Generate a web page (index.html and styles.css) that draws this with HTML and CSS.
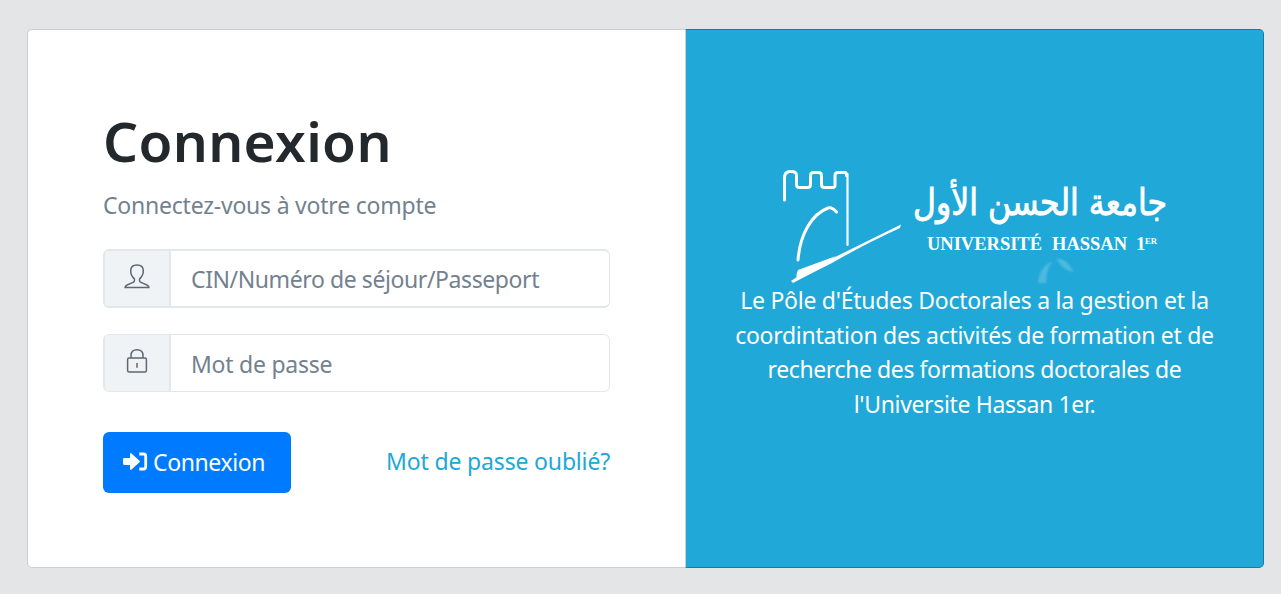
FILE: index.html
```
<!DOCTYPE html>
<html lang="fr">
<head>
<meta charset="utf-8">
<title>Connexion</title>
<link rel="stylesheet" href="styles.css">
</head>
<body>
<main class="card-group">
  <section class="login">
    <h1 class="title">Connexion</h1>
    <p class="subtitle">Connectez-vous à votre compte</p>
    <div class="field">
      <span class="addon">
        <svg width="26" height="26" viewBox="0 0 26 26"><path d="M10.400 17v-2.200C7.900 12.800 6.600 9.800 6.700 6.600 6.800 2.900 9.300 1 13 1s6.200 1.900 6.300 5.600c.1 3.200-1.200 6.200-3.700 8.200V17c0 1.300 1.300 1.700 4.400 2.700 4 1.300 4.900 1.900 4.900 3.700H1.100c0-1.800.9-2.400 4.900-3.700 3.100-1 4.400-1.400 4.400-2.700z"/></svg>
      </span>
      <span class="control user-hint">CIN/Numéro de séjour/Passeport</span>
    </div>
    <div class="field">
      <span class="addon">
        <svg width="26" height="26" viewBox="0 0 26 26"><rect x="3.600" y="10" width="18.800" height="14" rx="1.500"/><path d="M7 10V7.500C7 3.700 9.500 1.700 13 1.700s6 2 6 5.800V10M13 15v4.800"/></svg>
      </span>
      <span class="control pass-hint">Mot de passe</span>
    </div>
    <div class="actions">
      <button class="submit" type="button">
        <svg width="25" height="20" viewBox="0 0 25 20"><path d="M0 7.400Q0 6 1.400 6H7V2.200Q7 .4 8.500 1.400l8 7.300q.9.800 0 1.600l-8 7.300Q7 18.600 7 16.800V13H1.400Q0 13 0 11.600z"/><path class="bracket" d="M16.300 2h4.200q2.200 0 2.200 2.200v10.600q0 2.200-2.200 2.200h-4.200"/></svg>
        <span>Connexion</span>
      </button>
      <a class="forgot" href="#">Mot de passe oublié?</a>
    </div>
  </section>
  <section class="about">
    <svg class="logo" width="400" height="120" viewBox="775 165 400 120">
      <g class="tower">
        <path d="M784.500 200V178q0-6 5-6.500 7-.7 7 4v9q0 3 3 3h8q3 0 3-3v-9q0-3 3-3h5q3 0 3 3v9q0 3 3 3h8q3 0 2.500-3v-9q0-3 3-3h7q1.500 0 1.500 3"/>
        <path class="thin" d="M847.500 174v71"/>
        <path d="M798 260c2-26 14-46 30-52q4-1.300 8.500 4"/>
      </g>
      <path class="slash" d="M791 281Q805 271 823 263L901 224.500 900 228Q863 245 832 263 808 275 793 283z"/>
      <path class="slash" d="M798 270 836 256 800 279q-6 0-2-9z"/>
      <text class="arabic" x="1040" y="215" text-anchor="middle" direction="rtl" textLength="254" lengthAdjust="spacingAndGlyphs">جامعة الحسن الأول</text>
      <text class="latin" x="927" y="250" textLength="115" lengthAdjust="spacingAndGlyphs">UNIVERSITÉ</text>
      <text class="latin" x="1052" y="250" textLength="75" lengthAdjust="spacingAndGlyphs">HASSAN</text>
      <text class="latin" x="1136" y="250">1</text>
      <text class="ordinal" x="1145" y="244" textLength="12" lengthAdjust="spacingAndGlyphs">ER</text>
      <path class="ghost" d="M1038 283c1-10 5-18 15-22l-3 4q-4 7-4 18zM1056 259q10-2 18 13-9 0-18-13z"/>
    </svg>
    <p class="blurb">
      <span class="l1">Le Pôle d'Études Doctorales a la gestion et la</span>
      <span class="l2">coordintation des activités de formation et de</span>
      <span class="l3">recherche des formations doctorales de</span>
      <span class="l4">l'Universite Hassan 1er.</span>
    </p>
  </section>
</main>
</body>
</html>
```
FILE: styles.css
```
* { box-sizing: border-box; }
body {
  margin: 0;
  height: 594px;
  padding: 29px 17px 26px 27px;
  background: #e4e5e6;
  color: #23282c;
  font-family: "Noto Sans", "Open Sans", sans-serif;
  font-size: 23px;
  line-height: 34.6px;
  overflow: hidden;
}
.card-group { display: flex; width: 1237px; height: 539px; }
.login {
  width: 658px;
  padding: 76px 75px 0;
  background: #fff;
  border: 1px solid #c8ced3;
  border-right: 0;
  border-radius: 5px 0 0 5px;
}
.title {
  margin: 0 0 13px;
  font-size: 55px;
  line-height: 69px;
  font-weight: 600;
  letter-spacing: .35px;
  white-space: nowrap;
}
.subtitle { margin: 0 0 26px; color: #73818f; line-height: 35px; letter-spacing: -.22px; white-space: nowrap; }
.field {
  display: flex;
  width: 507px;
  height: 59px;
  margin-bottom: 26px;
  border: 2px solid #e4e7ea;
  border-right-width: 1px;
  border-radius: 6px;
  overflow: hidden;
}
.field + .field { height: 58px; border-width: 1px 1px 1px 2px; margin-bottom: 40px; }
.addon {
  display: flex;
  justify-content: center;
  width: 66px;
  padding-top: 13px;
  background: #f0f3f5;
  border-right: 2px solid #e4e7ea;
}
.addon svg { fill: none; stroke: #5c6873; stroke-width: 1.5; }
.control { flex: 1; padding: 11px 0 0 20px; color: #73818f; white-space: nowrap; }
.user-hint { letter-spacing: -.41px; }
.pass-hint { padding-top: 12px; letter-spacing: -.25px; }
.actions { display: flex; justify-content: space-between; width: 507px; }
.submit {
  display: flex;
  align-items: center;
  gap: 5px;
  width: 188px;
  height: 61px;
  padding: 0 0 0 20px;
  border: 0;
  border-radius: 6px;
  background: #007bff;
  color: #fff;
  font: inherit;
  letter-spacing: -.4px;
}
.submit svg { fill: #fff; margin-top: -2px; }
.submit .bracket { fill: none; stroke: #fff; stroke-width: 2.800; }
.forgot { padding-top: 12px; color: #20a8d8; letter-spacing: -.17px; text-decoration: none; white-space: nowrap; }
.about {
  width: 579px;
  padding-top: 135px;
  background: #20a8d8;
  border: 1px solid #187da0;
  border-left-color: #c8ced3;
  border-radius: 0 5px 5px 0;
  color: #fff;
  text-align: center;
}
.logo { display: block; margin-left: 89px; overflow: visible; }
.tower path { fill: none; stroke: #fff; stroke-width: 3; stroke-linecap: round; }
.tower .thin { stroke-width: 2.200; }
.slash { fill: #fff; }
.ghost { fill: #fff; opacity: .2; filter: blur(.8px); }
.arabic {
  fill: #fff;
  stroke: #fff;
  stroke-width: .9;
  font-family: "DejaVu Sans", sans-serif;
  font-size: 37px;
}
.latin { fill: #fff; font-family: "Liberation Serif", serif; font-size: 19px; font-weight: 700; }
.ordinal { fill: #fff; font-family: "Liberation Serif", serif; font-size: 9px; font-weight: 700; }
.blurb { margin: -2px 0 0; white-space: nowrap; }
.blurb span { display: block; }
.l1 { letter-spacing: -.26px; }
.l2 { letter-spacing: -.28px; }
.l3 { letter-spacing: -.4px; }
.l4 { letter-spacing: -.34px; }
```
